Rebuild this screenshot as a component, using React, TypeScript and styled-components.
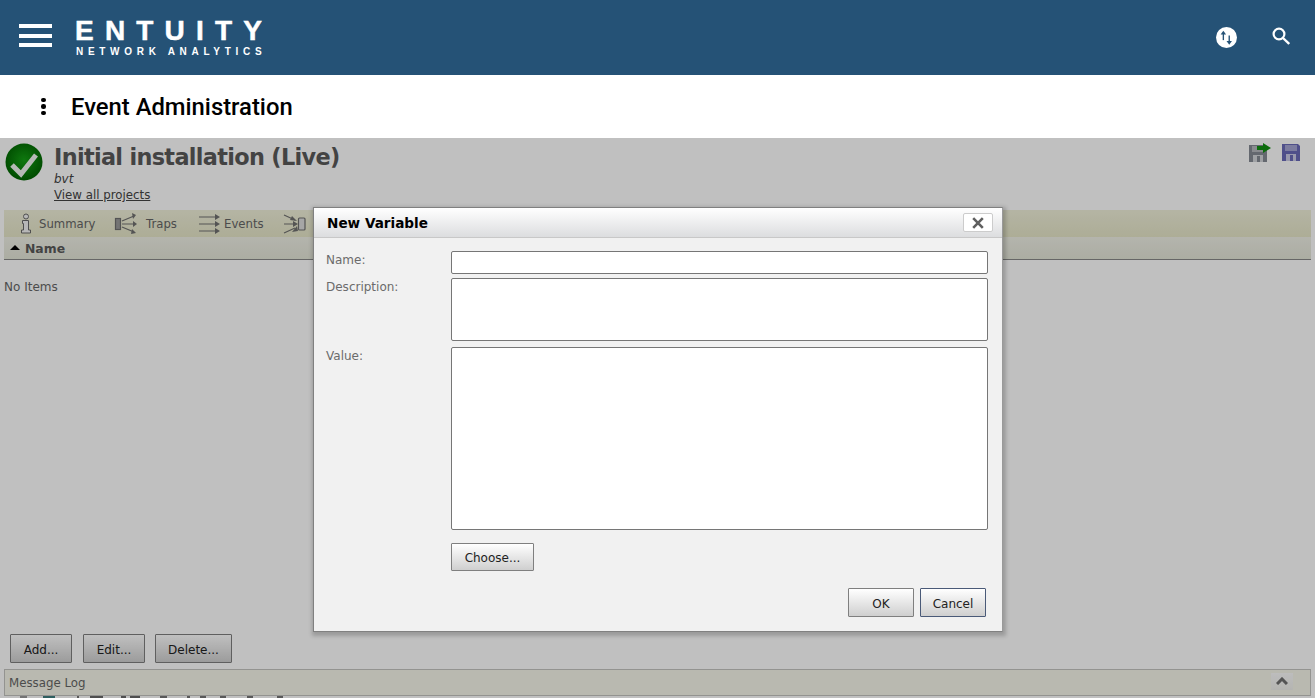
import styled, { createGlobalStyle } from "styled-components";

const GlobalStyle = createGlobalStyle`
  html, body {
    margin: 0;
    padding: 0;
    height: 100%;
    overflow: hidden;
    background: #ffffff;
    font-family: "DejaVu Sans", Verdana, sans-serif;
  }
  * {
    box-sizing: border-box;
  }
`;

const Page = styled.div`
  position: relative;
  display: flex;
  flex-direction: column;
  width: 1315px;
  height: 698px;
  overflow: hidden;
`;

const TopBar = styled.header`
  display: flex;
  align-items: center;
  flex: 0 0 75px;
  height: 75px;
  padding: 0 25px 0 19px;
  background: #255276;
`;

const Burger = styled.div`
  display: flex;
  flex-direction: column;
  gap: 5.5px;
  width: 33px;
  margin: 0 23px 4px 0;
  span {
    height: 4px;
    background: #ffffff;
  }
`;

const Logo = styled.div`
  display: flex;
  flex-direction: column;
  padding-bottom: 2px;
  color: #ffffff;
  font-family: "Liberation Sans", Arial, sans-serif;
  font-weight: 700;
`;

const LogoMain = styled.div`
  font-size: 28px;
  line-height: 28px;
  letter-spacing: 11.2px;
  white-space: nowrap;
  -webkit-text-stroke: 0.5px #ffffff;
`;

const LogoSub = styled.div`
  margin: 2px 0 0 1px;
  font-size: 10px;
  line-height: 10px;
  letter-spacing: 4.7px;
  white-space: nowrap;
`;

const TopIcons = styled.div`
  display: flex;
  align-items: center;
  gap: 35px;
  margin-left: auto;
`;

const SearchGlyph = styled.svg`
  margin-bottom: 3px;
`;

const TitleBar = styled.div`
  display: flex;
  align-items: center;
  flex: 0 0 63px;
  height: 63px;
  padding-left: 41px;
  background: #ffffff;
`;

const Kebab = styled.div`
  display: flex;
  flex-direction: column;
  gap: 2px;
  width: 5px;
  margin-right: 25px;
  span {
    width: 4.5px;
    height: 4.5px;
    border-radius: 50%;
    background: #000000;
  }
`;

const PageTitle = styled.h1`
  margin: 0;
  font-family: Roboto, sans-serif;
  font-size: 23.8px;
  font-weight: 500;
  color: #000000;
`;

const Content = styled.main`
  position: relative;
  display: flex;
  flex-direction: column;
  flex: 1;
  min-height: 0;
  overflow: hidden;
  background: #ffffff;
  color: #444444;
  font-size: 11.8px;
`;

const ProjectHead = styled.div`
  display: flex;
  height: 72px;
  padding: 5px 15px 0 5px;
`;

const ProjectText = styled.div`
  display: flex;
  flex-direction: column;
  margin: 1px 0 0 11px;
`;

const ProjectName = styled.div`
  font-size: 22.4px;
  line-height: 27px;
  font-weight: 700;
  letter-spacing: -0.68px;
  color: #5a5a5a;
  white-space: nowrap;
`;

const ProjectSub = styled.div`
  font-size: 12px;
  line-height: 16px;
  font-style: italic;
  color: #444444;
`;

const ProjectLink = styled.a`
  font-size: 11.8px;
  line-height: 16px;
  color: #444444;
  text-decoration: underline;
`;

const SaveIcons = styled.div`
  display: flex;
  align-items: flex-start;
  gap: 11px;
  margin-left: auto;
`;

const TabBar = styled.div`
  display: flex;
  align-items: center;
  height: 27px;
  margin: 0 4px;
  padding-left: 14px;
  background: linear-gradient(#f0f0da, #e6e6c8);
`;

const Tab = styled.div<{ $width: number; $gap: number }>`
  display: flex;
  align-items: center;
  gap: ${(p) => p.$gap}px;
  width: ${(p) => p.$width}px;
  font-size: 11.7px;
  color: #666666;
`;

const TableHead = styled.div`
  display: flex;
  align-items: center;
  height: 23px;
  margin: 0 4px;
  padding-left: 6px;
  gap: 5px;
  border-bottom: 1px solid #888888;
  background: linear-gradient(#eff0e6, #e4e6d8);
  font-size: 12.4px;
  font-weight: 700;
  color: #5a5a5a;
`;

const SortArrow = styled.span`
  width: 0;
  height: 0;
  border-left: 5px solid transparent;
  border-right: 5px solid transparent;
  border-bottom: 5px solid #000000;
  margin-bottom: 2px;
`;

const EmptyNote = styled.div`
  flex: 1;
  padding: 19px 0 0 4px;
  font-size: 12px;
  line-height: 16px;
  color: #666666;
`;

const BottomActions = styled.div`
  display: flex;
  gap: 10px;
  padding-left: 10px;
  margin-bottom: 6px;
  > :first-child {
    margin-right: 1px;
  }
`;

const Button = styled.button<{ $width: number; $height?: number; $focused?: boolean }>`
  width: ${(p) => p.$width}px;
  height: ${(p) => p.$height ?? 28}px;
  padding: 2px 0 0;
  border: 1px solid ${(p) => (p.$focused ? "#4a5a78" : "#7f7f7f")};
  border-radius: 1px;
  background: linear-gradient(#ffffff, #cfcfcf);
  font-family: inherit;
  font-size: 12px;
  color: #222222;
`;

const LogBar = styled.div`
  display: flex;
  align-items: center;
  justify-content: space-between;
  flex: 0 0 27px;
  height: 27px;
  margin: 0 4px;
  padding: 0 17px 0 4px;
  border: 1px solid #c4c4c0;
  background: #f6f6ea;
  font-size: 11.8px;
  color: #666666;
`;

const LogToggle = styled.div`
  display: flex;
  align-items: center;
  justify-content: center;
  width: 22px;
  height: 17px;
  margin-top: -3px;
  background: linear-gradient(#fbfbfb, #f0f0ec);
`;

/* only the top two pixels of whatever is under the log are visible */
const ClippedRow = styled.div`
  display: flex;
  flex: 0 0 2px;
  height: 2px;
`;

const ClippedMark = styled.span<{ $left: number; $width: number; $color: string }>`
  width: ${(p) => p.$width}px;
  margin-left: ${(p) => p.$left}px;
  background: ${(p) => p.$color};
`;

/* dims everything below the top bars while the dialog is open */
const Overlay = styled.div`
  position: absolute;
  inset: 0;
  background: rgba(0, 0, 0, 0.247);
`;

const Dialog = styled.div`
  position: absolute;
  top: 207px;
  left: 313px;
  display: flex;
  flex-direction: column;
  width: 690px;
  height: 425px;
  border: 1px solid #808080;
  border-right-color: #999999;
  background: #f1f1f1;
  box-shadow: 1px 2px 4px 2px rgba(0, 0, 0, 0.2);
`;

const DialogHead = styled.div`
  display: flex;
  align-items: center;
  justify-content: space-between;
  flex: 0 0 30px;
  height: 30px;
  padding: 0 9px 0 13px;
  border-bottom: 1px solid #c8c8c8;
  background: linear-gradient(#ffffff, #dcdddf);
`;

const DialogTitle = styled.div`
  font-size: 13.6px;
  font-weight: 700;
  color: #000000;
`;

const CloseButton = styled.button`
  display: flex;
  align-items: center;
  justify-content: center;
  width: 30px;
  height: 19px;
  padding: 0;
  border: 1px solid #cccccc;
  border-radius: 2px;
  background: #ffffff;
`;

const DialogBody = styled.div`
  display: grid;
  grid-template-columns: 125px 537px;
  grid-template-rows: 23px 65px 183px;
  row-gap: 4px;
  padding: 13px 0 0 12px;
`;

const FieldLabel = styled.label`
  padding-top: 1px;
  font-size: 12px;
  line-height: 16px;
  color: #6b6b6b;
`;

const Field = styled.div<{ $height: number }>`
  height: ${(p) => p.$height}px;
  border: 1px solid #767676;
  border-radius: 2px;
  background: #ffffff;
`;

const ChooseRow = styled.div`
  display: flex;
  padding: 13px 0 0 137px;
`;

const DialogActions = styled.div`
  display: flex;
  justify-content: flex-end;
  gap: 6px;
  padding: 17px 16px 0 0;
`;

const clippedMarks = [
  { left: 20, width: 7, color: "#9a9a9a" },
  { left: 16, width: 12, color: "#3f7f80" },
  { left: 22, width: 2, color: "#777777" },
  { left: 11, width: 13, color: "#6a6a6a" },
  { left: 18, width: 5, color: "#6a6a6a" },
  { left: 4, width: 10, color: "#6a6a6a" },
  { left: 20, width: 7, color: "#777777" },
  { left: 20, width: 3, color: "#777777" },
  { left: 10, width: 6, color: "#777777" },
  { left: 14, width: 6, color: "#777777" },
  { left: 21, width: 6, color: "#777777" },
  { left: 24, width: 6, color: "#777777" },
];

const SwapIcon = () => (
  <svg width="21" height="21" viewBox="0 0 20 20">
    <circle cx="10" cy="10" r="10" fill="#ffffff" />
    <path d="M7 12.5V6.5" stroke="#255276" strokeWidth="1.3" />
    <path d="M4.4 7.2 7 3.6l2.6 3.6z" fill="#255276" />
    <path d="M12.6 8v6" stroke="#255276" strokeWidth="1.3" />
    <path d="M10 13.4l2.6 3.6 2.6-3.6z" fill="#255276" />
  </svg>
);

const SearchIcon = () => (
  <SearchGlyph width="18" height="18" viewBox="0 0 18 18">
    <circle cx="7" cy="7" r="5.4" fill="none" stroke="#ffffff" strokeWidth="2.2" />
    <path d="m11 11 6.2 6" stroke="#ffffff" strokeWidth="2.4" />
  </SearchGlyph>
);

const CheckBadge = () => (
  <svg width="38" height="38" viewBox="0 0 38 38">
    <defs>
      <radialGradient id="badge" cx="50%" cy="45%" r="55%">
        <stop offset="0%" stopColor="#14a014" />
        <stop offset="100%" stopColor="#006400" />
      </radialGradient>
    </defs>
    <circle cx="19" cy="19" r="18.5" fill="url(#badge)" />
    <path d="m7 22 9 9 15-19" fill="none" stroke="#f2f6f2" strokeWidth="5" />
  </svg>
);

const Floppy = ({ color }: { color: string }) => (
  <>
    <path d="M0 1h16l2 2v15H0z" fill={color} />
    <path d="M3 2h12v6H3z" fill="#ffffff" opacity="0.4" />
    <path d="M4 11h10v7H4z" fill="#ffffff" opacity="0.65" />
    <path d="M8 12h3v6H8z" fill={color} />
  </>
);

const SaveAsIcon = () => (
  <svg width="22" height="19" viewBox="0 0 22 19">
    <g transform="translate(0 1)">
      <Floppy color="#858a94" />
    </g>
    <path d="M8 3h6V0l8 5-8 5V7H8z" fill="#109010" />
  </svg>
);

const SaveIcon = () => (
  <svg width="18" height="18" viewBox="0 0 18 18">
    <Floppy color="#6a6ab8" />
  </svg>
);

const InfoIcon = () => (
  <svg width="16" height="21" viewBox="0 0 16 21" fill="#f4f4f4" stroke="#6a6a6a">
    <circle cx="8" cy="3.5" r="2.5" />
    <path d="M4.5 7.5h6v9.5h2v3h-9v-3h2v-6.5h-1z" />
  </svg>
);

const TrapsIcon = () => (
  <svg width="24" height="22" viewBox="0 0 24 22" fill="none" stroke="#707070" strokeWidth="1.2">
    <rect x="1.5" y="5.5" width="5" height="11" fill="#9a9a9a" />
    <path d="M8 8 20 3M8 11h13M8 14l12 5" />
    <path d="m18 0 4 2-3 4zM19 8l4 3-4 3zM18 16l4 4-5 1z" fill="#707070" stroke="none" />
  </svg>
);

const EventsIcon = () => (
  <svg width="22" height="22" viewBox="0 0 22 22" fill="none" stroke="#707070" strokeWidth="1.2">
    <path d="M0 4h17M0 11h17M0 18h17" />
    <path d="m16 1 5 3-5 3zM16 8l5 3-5 3zM16 15l5 3-5 3z" fill="#707070" stroke="none" />
  </svg>
);

const VariablesIcon = () => (
  <svg width="23" height="22" viewBox="0 0 23 22" fill="none" stroke="#707070" strokeWidth="1.2">
    <path d="M1 2l11 5M1 11h11M1 20l11-5" />
    <path d="m9 3 5 5-7-1zM10 8l5 3-5 3zM9 19l5-6 1 5z" fill="#707070" stroke="none" />
    <rect x="15.5" y="5" width="6.5" height="12" rx="1" fill="#dddddd" />
  </svg>
);

const CloseGlyph = () => (
  <svg width="12" height="12" viewBox="0 0 12 12">
    <path d="m1.2 1.2 9.6 9.6m0-9.6-9.6 9.6" stroke="#5f5f5f" strokeWidth="2.6" />
  </svg>
);

const ChevronUp = () => (
  <svg width="12" height="8" viewBox="0 0 12 8">
    <path d="m1 7 5-5 5 5" fill="none" stroke="#707070" strokeWidth="3" />
  </svg>
);

const App = () => {
  return (
    <>
      <GlobalStyle />
      <Page>
        <TopBar>
          <Burger>
            <span />
            <span />
            <span />
          </Burger>
          <Logo>
            <LogoMain>ENTUITY</LogoMain>
            <LogoSub>NETWORK ANALYTICS</LogoSub>
          </Logo>
          <TopIcons>
            <SwapIcon />
            <SearchIcon />
          </TopIcons>
        </TopBar>
        <TitleBar>
          <Kebab>
            <span />
            <span />
            <span />
          </Kebab>
          <PageTitle>Event Administration</PageTitle>
        </TitleBar>
        <Content>
          <ProjectHead>
            <CheckBadge />
            <ProjectText>
              <ProjectName>Initial installation (Live)</ProjectName>
              <ProjectSub>bvt</ProjectSub>
              <ProjectLink>View all projects</ProjectLink>
            </ProjectText>
            <SaveIcons>
              <SaveAsIcon />
              <SaveIcon />
            </SaveIcons>
          </ProjectHead>
          <TabBar>
            <Tab $width={96} $gap={5}>
              <InfoIcon />
              Summary
            </Tab>
            <Tab $width={85} $gap={8}>
              <TrapsIcon />
              Traps
            </Tab>
            <Tab $width={84} $gap={3}>
              <EventsIcon />
              Events
            </Tab>
            <Tab $width={40} $gap={0}>
              <VariablesIcon />
            </Tab>
          </TabBar>
          <TableHead>
            <SortArrow />
            Name
          </TableHead>
          <EmptyNote>No Items</EmptyNote>
          <BottomActions>
            <Button $width={62} $height={29}>
              Add...
            </Button>
            <Button $width={62} $height={29}>
              Edit...
            </Button>
            <Button $width={77} $height={29}>
              Delete...
            </Button>
          </BottomActions>
          <LogBar>
            Message Log
            <LogToggle>
              <ChevronUp />
            </LogToggle>
          </LogBar>
          <ClippedRow>
            {clippedMarks.map((m, i) => (
              <ClippedMark key={i} $left={m.left} $width={m.width} $color={m.color} />
            ))}
          </ClippedRow>
          <Overlay />
        </Content>
        <Dialog>
          <DialogHead>
            <DialogTitle>New Variable</DialogTitle>
            <CloseButton>
              <CloseGlyph />
            </CloseButton>
          </DialogHead>
          <DialogBody>
            <FieldLabel>Name:</FieldLabel>
            <Field $height={23} />
            <FieldLabel>Description:</FieldLabel>
            <Field $height={63} />
            <FieldLabel>Value:</FieldLabel>
            <Field $height={183} />
          </DialogBody>
          <ChooseRow>
            <Button $width={83}>Choose...</Button>
          </ChooseRow>
          <DialogActions>
            <Button $width={66} $height={29}>
              OK
            </Button>
            <Button $width={66} $height={29} $focused>
              Cancel
            </Button>
          </DialogActions>
        </Dialog>
      </Page>
    </>
  );
};

export default App;
